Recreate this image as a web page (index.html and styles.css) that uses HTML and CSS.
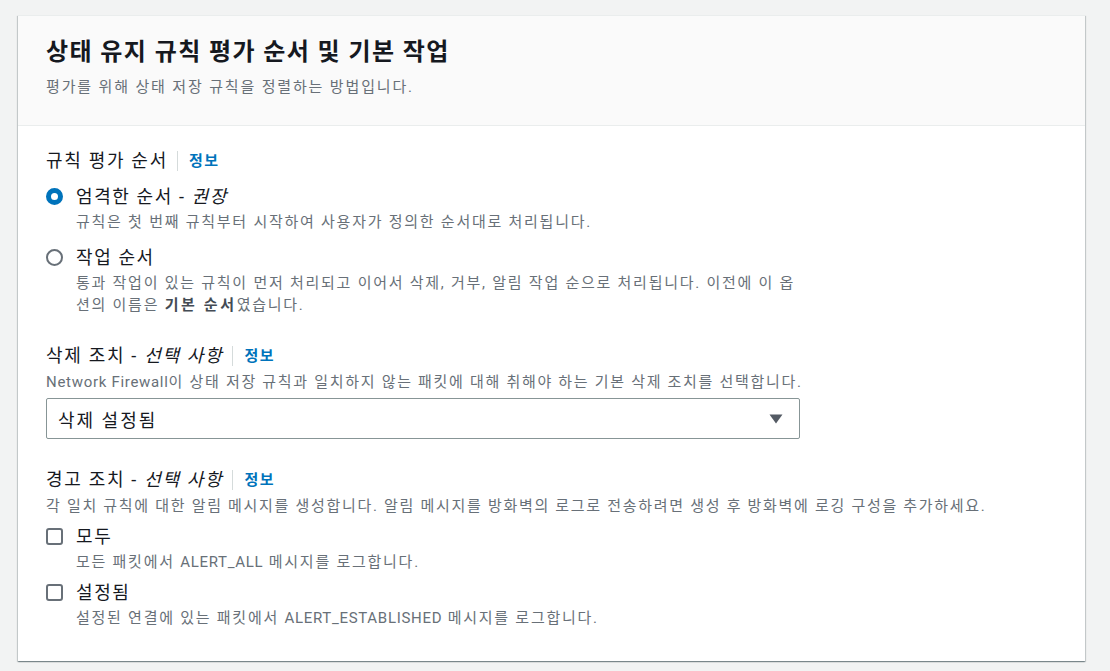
FILE: index.html
```html
<!DOCTYPE html>
<html lang="ko">
<head>
<meta charset="utf-8">
<link rel="stylesheet" href="styles.css">
</head>
<body>
<div class="card">
  <div class="card-header">
    <h2 class="title">상태 유지 규칙 평가 순서 및 기본 작업</h2>
    <p class="subtitle">평가를 위해 상태 저장 규칙을 정렬하는 방법입니다.</p>
  </div>
  <div class="card-body">
    <div class="field field-order">
      <div class="label-row"><span class="label">규칙 평가 순서</span><span class="info">정보</span></div>
      <div class="option">
        <span class="radio checked"></span>
        <div class="option-text">
          <div class="option-label">엄격한 순서 - <i>권장</i></div>
          <div class="option-desc">규칙은 첫 번째 규칙부터 시작하여 사용자가 정의한 순서대로 처리됩니다.</div>
        </div>
      </div>
      <div class="option">
        <span class="radio"></span>
        <div class="option-text">
          <div class="option-label">작업 순서</div>
          <div class="option-desc">통과 작업이 있는 규칙이 먼저 처리되고 이어서 삭제, 거부, 알림 작업 순으로 처리됩니다. 이전에 이 옵션의 이름은 <b>기본 순서</b>였습니다.</div>
        </div>
      </div>
    </div>

    <div class="field field-drop">
      <div class="label-row"><span class="label">삭제 조치 - <i>선택 사항</i></span><span class="info">정보</span></div>
      <div class="desc"><span class="en">Network Firewall</span>이 상태 저장 규칙과 일치하지 않는 패킷에 대해 취해야 하는 기본 삭제 조치를 선택합니다.</div>
      <div class="select">
        <span class="select-value">삭제 설정됨</span>
        <svg class="caret" width="14" height="10" viewBox="0 0 14 10"><path d="M0.5 0.5 L13.5 0.5 L7 9.5 Z" fill="#545b64"/></svg>
      </div>
    </div>

    <div class="field field-alert">
      <div class="label-row"><span class="label">경고 조치 - <i>선택 사항</i></span><span class="info">정보</span></div>
      <div class="desc">각 일치 규칙에 대한 알림 메시지를 생성합니다. 알림 메시지를 방화벽의 로그로 전송하려면 생성 후 방화벽에 로깅 구성을 추가하세요.</div>
      <div class="option">
        <span class="checkbox"></span>
        <div class="option-text">
          <div class="option-label">모두</div>
          <div class="option-desc">모든 패킷에서 <span class="en">ALERT_ALL</span> 메시지를 로그합니다.</div>
        </div>
      </div>
      <div class="option">
        <span class="checkbox"></span>
        <div class="option-text">
          <div class="option-label">설정됨</div>
          <div class="option-desc">설정된 연결에 있는 패킷에서 <span class="en">ALERT_ESTABLISHED</span> 메시지를 로그합니다.</div>
        </div>
      </div>
    </div>
  </div>
</div>
</body>
</html>
```

FILE: styles.css
```css
* { box-sizing: border-box; }
html, body { margin: 0; padding: 0; }
body {
  background: #f2f3f3;
  font-family: Roboto, "Noto Sans CJK KR", sans-serif;
  color: #16191f;
  padding: 15px 25px 10px 18px;
}
.card {
  background: #fff;
  width: 1067px;
  height: 646px;
  box-shadow: 0 1px 1px 0 rgba(0,28,36,.3), 1px 1px 1px 0 rgba(0,28,36,.15), -1px 1px 1px 0 rgba(0,28,36,.15);
  border-top: 1px solid #eaeded;
}
.card-header {
  background: #fafafa;
  border-bottom: 1px solid #eaeded;
  padding: 20px 28px 0 28px;
  height: 110px;
}
.title {
  margin: 0;
  font-size: 24px;
  letter-spacing: 1.4px;
  line-height: 32px;
  font-weight: 700;
}
.subtitle {
  margin: 8px 0 0;
  font-size: 15px;
  letter-spacing: 1.85px;
  line-height: 22px;
  color: #687078;
}
.card-body {
  padding: 22px 28px 0 28px;
}
.label-row {
  display: flex;
  align-items: center;
  height: 26px;
}
.label {
  font-size: 18px;
  letter-spacing: 1.7px;
  line-height: 26px;
}
.info {
  margin-left: 9px;
  padding-left: 11px;
  border-left: 1px solid #d5dbdb;
  font-size: 15px;
  letter-spacing: 1.5px;
  line-height: 20px;
  font-weight: 700;
  color: #0073bb;
}
.option {
  display: flex;
  align-items: flex-start;
  margin-top: 10px;
}
.option-text { margin-left: 13px; }
.option-label {
  font-size: 18px;
  letter-spacing: 1.6px;
  line-height: 26px;
}
.option-desc {
  margin-top: 1px;
  font-size: 15px;
  letter-spacing: 1.75px;
  line-height: 22px;
  color: #687078;
}
.en { letter-spacing: 0.7px; }
.field-order .option + .option { margin-top: 12px; }
.field-order .option-desc { max-width: 722px; }
.radio {
  flex: none;
  width: 17px;
  height: 17px;
  border-radius: 50%;
  border: 2px solid #687078;
  margin-top: 4px;
  background: #fff;
}
.radio.checked {
  border: 5px solid #0073bb;
}
.checkbox {
  flex: none;
  width: 17px;
  height: 17px;
  border-radius: 3px;
  border: 2px solid #687078;
  margin-top: 4px;
}
.field-alert .option { margin-top: 7px; }
.field-order { margin-bottom: 27px; }
.field-drop { margin-bottom: 28px; }
.desc {
  margin-top: 2px;
  font-size: 15px;
  letter-spacing: 1.7px;
  line-height: 22px;
  color: #687078;
}
.select {
  margin-top: 5px;
  width: 754px;
  height: 41px;
  border: 1px solid #879596;
  border-radius: 2px;
  display: flex;
  align-items: center;
  justify-content: space-between;
  padding: 0 16px 0 11px;
  font-size: 18px;
  letter-spacing: 2px;
}
i { font-style: italic; }
b { font-weight: 700; color: #444b54; letter-spacing: 2.6px; }
```
